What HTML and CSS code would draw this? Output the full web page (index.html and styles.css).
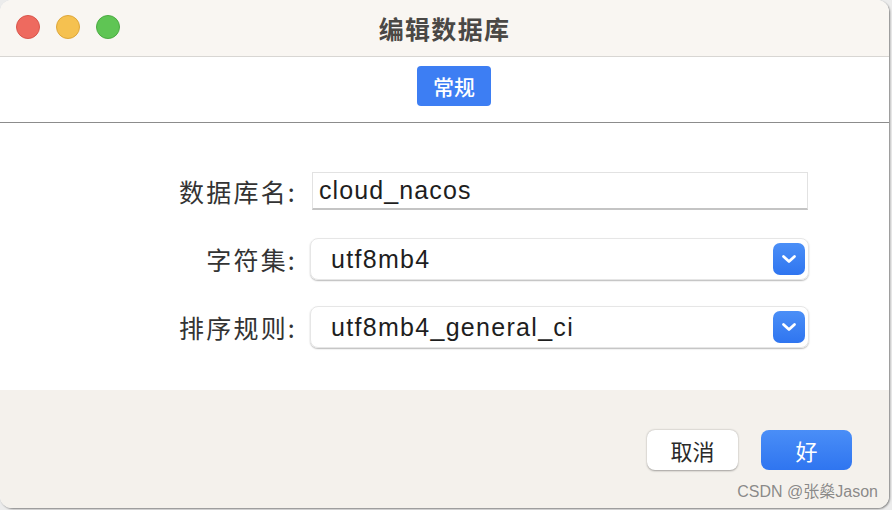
FILE: index.html
```html
<!DOCTYPE html>
<html lang="zh-CN">
<head>
<meta charset="utf-8">
<title>编辑数据库</title>
<link rel="stylesheet" href="styles.css">
</head>
<body>
<div class="window">
  <div class="titlebar">
    <div class="lights">
      <span class="light red"></span>
      <span class="light yellow"></span>
      <span class="light green"></span>
    </div>
    <div class="title">编辑数据库</div>
  </div>
  <div class="tabs">
    <span class="tab">常规</span>
  </div>
  <div class="form">
    <label class="label">数据库名:</label>
    <div class="textfield">cloud_nacos</div>
    <label class="label">字符集:</label>
    <div class="select">
      <span class="value">utf8mb4</span>
      <span class="chev"><svg width="16" height="10" viewBox="0 0 16 10"><path d="M2.5 2.5 L8 7.5 L13.5 2.5" fill="none" stroke="#fff" stroke-width="2.8" stroke-linecap="round" stroke-linejoin="round"/></svg></span>
    </div>
    <label class="label">排序规则:</label>
    <div class="select">
      <span class="value">utf8mb4_general_ci</span>
      <span class="chev"><svg width="16" height="10" viewBox="0 0 16 10"><path d="M2.5 2.5 L8 7.5 L13.5 2.5" fill="none" stroke="#fff" stroke-width="2.8" stroke-linecap="round" stroke-linejoin="round"/></svg></span>
    </div>
  </div>
  <div class="footer">
    <button class="btn cancel">取消</button>
    <button class="btn ok">好</button>
  </div>
  <div class="watermark">CSDN @张燊Jason</div>
</div>
</body>
</html>
```

FILE: styles.css
```css
html, body {
  margin: 0;
  padding: 0;
  background: #ececec;
}
body {
  width: 892px;
  height: 510px;
  overflow: hidden;
  font-family: "Liberation Sans", "Noto Sans CJK SC", sans-serif;
}
.window {
  position: relative;
  width: 889px;
  height: 508px;
  border-radius: 12px;
  overflow: hidden;
  background: #ffffff;
  box-shadow: 1px 1px 2px rgba(0,0,0,0.45);
  display: flex;
  flex-direction: column;
}
.titlebar {
  position: relative;
  height: 56px;
  flex: 0 0 56px;
  background: #f9f6f2;
  border-bottom: 1px solid #d8d6d3;
  display: flex;
  align-items: center;
  justify-content: center;
}
.lights {
  position: absolute;
  left: 16px;
  top: 15px;
  display: flex;
  gap: 16px;
}
.light {
  width: 24px;
  height: 24px;
  border-radius: 50%;
  box-sizing: border-box;
}
.red { background: #ee6a5f; border: 1px solid #d9564c; }
.yellow { background: #f5c150; border: 1px solid #dea73a; }
.green { background: #5fc554; border: 1px solid #4cab42; }
.title {
  font-family: "Noto Sans CJK SC", sans-serif;
  font-weight: 700;
  font-size: 25px;
  color: #4a4845;
  letter-spacing: 1.3px;
  margin-left: 0;
}
.tabs {
  height: 66px;
  flex: 0 0 66px;
  border-bottom: 1px solid #8c8c8c;
  display: flex;
  justify-content: center;
  padding-top: 9px;
  box-sizing: border-box;
  padding-left: 19px;
}
.tab {
  width: 74px;
  height: 40px;
  border-radius: 4px;
  background: #3d7ef3;
  color: #fff;
  font-family: "Noto Sans CJK SC", sans-serif;
  font-size: 21px;
  font-weight: 500;
  display: flex;
  align-items: center;
  justify-content: center;
}
.form {
  flex: 0 0 267px;
  height: 267px;
  box-sizing: border-box;
  padding-top: 47px;
  display: grid;
  grid-template-columns: 297px 499px;
  grid-auto-rows: 42px;
  column-gap: 13px;
  row-gap: 26px;
  align-items: center;
}
.label {
  text-align: right;
  font-family: "Noto Sans CJK SC", sans-serif;
  font-size: 25px;
  font-weight: 400;
  letter-spacing: 2.2px;
  color: #333333;
}
.textfield {
  height: 38px;
  margin-left: 2px;
  margin-right: 1px;
  box-sizing: border-box;
  border: 1px solid #e2e2e2;
  border-bottom: 2px solid #c4c4c4;
  font-size: 25px;
  letter-spacing: 1.1px;
  color: #1e1e1e;
  padding-left: 6px;
  display: flex;
  align-items: center;
}
.select {
  height: 42px;
  box-sizing: border-box;
  border: 1px solid #e6e6e6;
  border-radius: 8px;
  box-shadow: 0 1px 1.5px rgba(0,0,0,0.28);
  display: flex;
  align-items: center;
  justify-content: space-between;
  padding-left: 20px;
  padding-right: 3px;
}
.value {
  font-size: 25px;
  letter-spacing: 1.3px;
  color: #1e1e1e;
}
.chev {
  width: 32px;
  height: 32px;
  border-radius: 7px;
  background: linear-gradient(#4b8ff7, #2f75f0);
  display: flex;
  align-items: center;
  justify-content: center;
}
.footer {
  flex: 1 1 auto;
  background: #f4f1ec;
  display: flex;
  justify-content: flex-end;
  align-items: flex-start;
  padding-top: 40px;
  padding-right: 37px;
  gap: 23px;
  box-sizing: border-box;
}
.btn {
  width: 91px;
  height: 40px;
  border-radius: 8px;
  border: none;
  font-family: "Noto Sans CJK SC", sans-serif;
  font-size: 22px;
  padding: 0;
}
.cancel {
  background: #ffffff;
  color: #2a2a2a;
  box-shadow: 0 0.5px 2px rgba(0,0,0,0.35);
}
.ok {
  background: linear-gradient(#4a8ef7, #2f75f0);
  color: #ffffff;
}
.watermark {
  position: absolute;
  right: 11px;
  bottom: 6px;
  font-family: "Liberation Sans", "Noto Sans CJK SC", sans-serif;
  font-size: 16px;
  color: rgba(110,110,110,0.8);
}
```
